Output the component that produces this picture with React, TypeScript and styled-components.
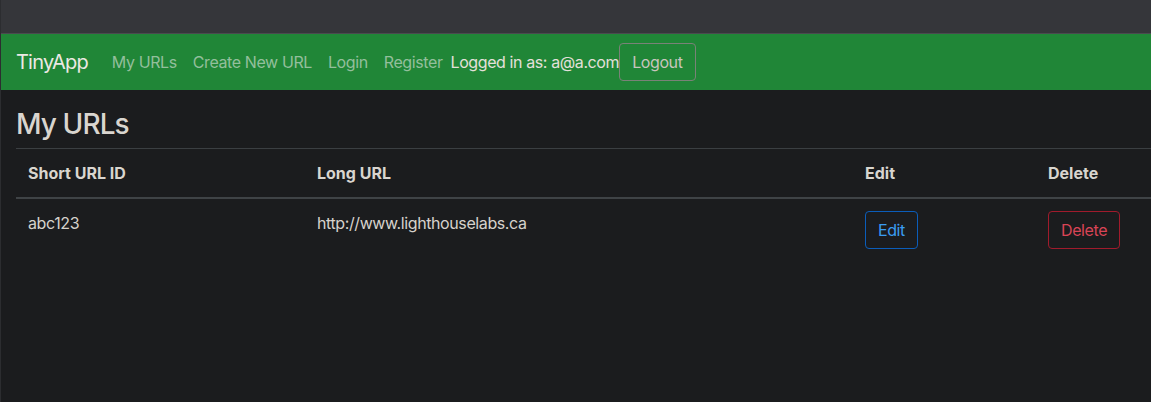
import React from "react";
import styled, { createGlobalStyle } from "styled-components";

const GlobalStyle = createGlobalStyle`
  html, body {
    margin: 0;
    padding: 0;
    background-color: #1b1c1e;
    overflow: hidden;
  }
  body {
    font-family: Inter, "Liberation Sans", sans-serif;
    font-size: 16px;
    line-height: 1.5;
    letter-spacing: -0.4px;
    color: #d6d2cc;
  }
`;

const Page = styled.div`
  min-height: 402px;
  border-left: 1px solid #2c2d30;
  box-sizing: border-box;
`;

const TopStrip = styled.div`
  height: 33px;
  background-color: #35363a;
  border-bottom: 1px solid #4a4b4f;
`;

const Navbar = styled.nav`
  display: flex;
  align-items: center;
  height: 56px;
  padding: 0 16px 0 15px;
  background-color: #208637;
`;

const Brand = styled.a`
  font-size: 20px;
  letter-spacing: -0.8px;
  color: #ece9e4;
  margin-right: 16px;
  text-decoration: none;
`;

const NavLink = styled.a`
  padding: 8px;
  color: #93bf9c;
  text-decoration: none;
`;

const UserInfo = styled.span`
  color: #e4e0da;
`;

const Button = styled.button<{ $tone: "light" | "blue" | "red" }>`
  font-family: inherit;
  font-size: 16px;
  letter-spacing: -0.4px;
  line-height: 24px;
  padding: 6px 12px;
  border-radius: 4px;
  background: transparent;
  cursor: pointer;
  border: 1px solid
    ${(p) =>
      p.$tone === "blue" ? "#0b5dba" : p.$tone === "red" ? "#a01b2c" : "#7a8278"};
  color: ${(p) =>
    p.$tone === "blue" ? "#3a9cf2" : p.$tone === "red" ? "#d94456" : "#c9c5be"};
`;

const Main = styled.main`
  padding: 0 16px 0 15px;
`;

const Title = styled.h3`
  margin: 18px 0 6px;
  font-size: 28px;
  font-weight: 500;
  letter-spacing: -0.9px;
  line-height: 1.2;
  color: #d9d5cf;
`;

const Table = styled.table`
  width: 1240px;
  table-layout: fixed;
  border-collapse: collapse;
`;

const HeadCell = styled.th<{ $w: number }>`
  box-sizing: border-box;
  width: ${(p) => p.$w}px;
  text-align: left;
  padding: 12px;
  font-weight: 700;
  letter-spacing: 0;
  color: #d9d5cf;
  border-top: 1px solid #3b3f42;
  border-bottom: 2px solid #3f4346;
`;

const Cell = styled.td`
  padding: 12px;
  vertical-align: top;
  color: #d6d2cc;
`;

const rows = [{ id: "abc123", url: "http://www.lighthouselabs.ca" }];

export default function App() {
  return (
    <Page>
      <GlobalStyle />
      <TopStrip />
      <Navbar>
        <Brand href="#">TinyApp</Brand>
        <NavLink href="#">My URLs</NavLink>
        <NavLink href="#">Create New URL</NavLink>
        <NavLink href="#">Login</NavLink>
        <NavLink href="#">Register</NavLink>
        <UserInfo>Logged in as: a@a.com</UserInfo>
        <Button $tone="light">Logout</Button>
      </Navbar>
      <Main>
        <Title>My URLs</Title>
        <Table>
          <thead>
            <tr>
              <HeadCell $w={289}>Short URL ID</HeadCell>
              <HeadCell $w={548}>Long URL</HeadCell>
              <HeadCell $w={183}>Edit</HeadCell>
              <HeadCell $w={220}>Delete</HeadCell>
            </tr>
          </thead>
          <tbody>
            {rows.map((r) => (
              <tr key={r.id}>
                <Cell>{r.id}</Cell>
                <Cell>{r.url}</Cell>
                <Cell>
                  <Button $tone="blue">Edit</Button>
                </Cell>
                <Cell>
                  <Button $tone="red">Delete</Button>
                </Cell>
              </tr>
            ))}
          </tbody>
        </Table>
      </Main>
    </Page>
  );
}
